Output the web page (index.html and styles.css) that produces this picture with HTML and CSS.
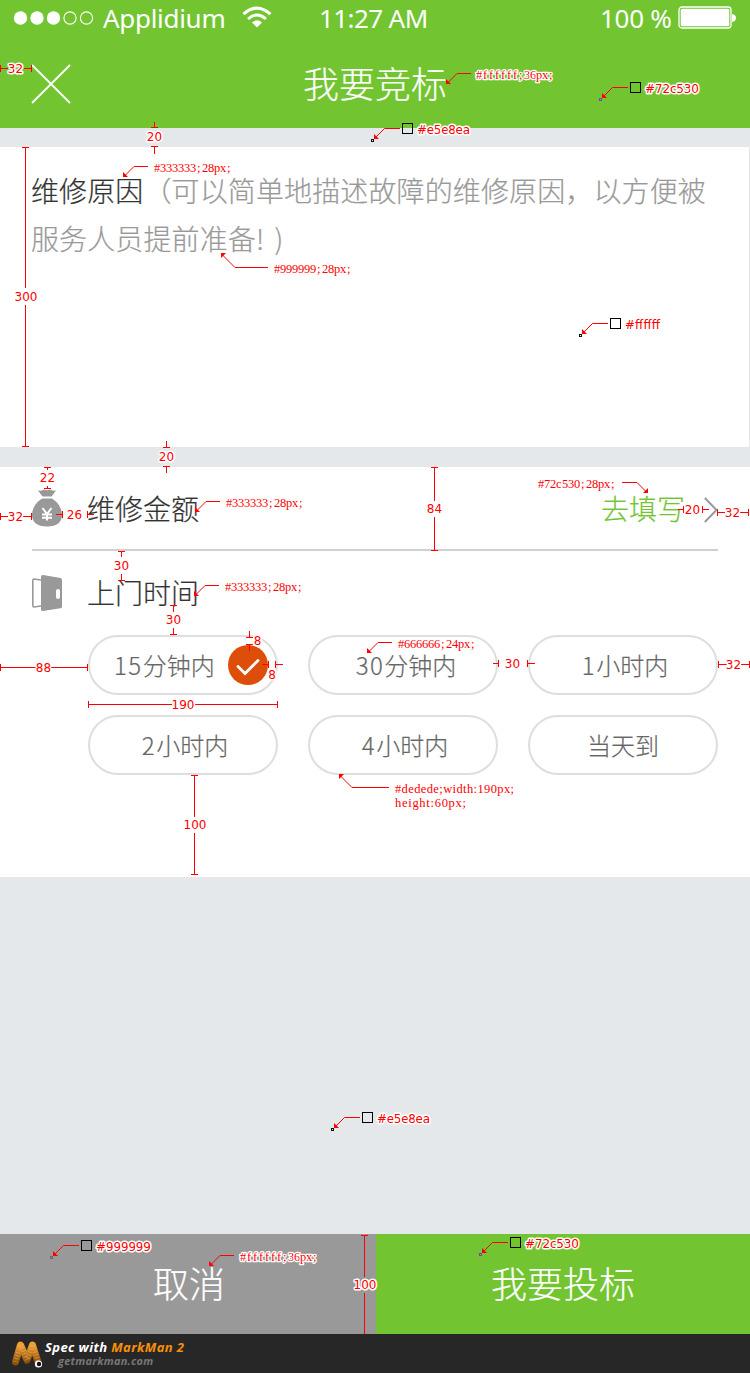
FILE: index.html
```html
<!DOCTYPE html>
<html lang="zh-CN">
<head>
<meta charset="utf-8">
<title>我要竞标</title>
<link rel="stylesheet" href="styles.css">
</head>
<body>
<div class="page">
  <header class="top">
    <div class="status">
      <svg class="signal" width="82" height="16" viewBox="0 0 82 16"><g fill="#fff"><circle cx="7.5" cy="8" r="6.7"/><circle cx="24" cy="8" r="6.7"/><circle cx="40.500" cy="8" r="6.7"/></g><g fill="none" stroke="#fff" stroke-width="1.1"><circle cx="57" cy="8" r="6.1"/><circle cx="73.5" cy="8" r="6.1"/></g></svg>
      <span class="carrier">Applidium</span>
      <svg class="wifi" width="30" height="22" viewBox="0 0 30 22"><g fill="none" stroke="#fff" stroke-width="3"><path d="M1.500 8.200Q15 -4 28.500 8.200"/><path d="M6 13Q15 5 24 13"/></g><path d="M10 16.500Q15 12.200 20 16.500L15 21.500Z" fill="#fff"/></svg>
      <span class="clock">11:27 AM</span>
      <span class="percent">100 %</span>
      <svg class="battery" width="58" height="24" viewBox="0 0 58 24"><rect x="1" y="1" width="52" height="21" rx="3" fill="none" stroke="#fff" stroke-width="1.300"/><rect x="2.700" y="2.700" width="48.600" height="17.600" rx="1.500" fill="#fff"/><path d="M54 8Q58 8.500 58 12Q58 15.500 54 16Z" fill="#fff"/></svg>
    </div>
    <div class="nav">
      <svg class="close" width="40" height="40" viewBox="0 0 40 40"><path d="M1 1L39 39M39 1L1 39" stroke="#fff" stroke-width="1.800"/></svg>
      <h1 class="title">我要竞标</h1>
    </div>
  </header>

  <section class="reason"><b class="reason-label">维修原因</b>（可以简单地描述故障的维修原因，以方便被服务人员提前准备<span class="ending">! )</span></section>

  <section class="details">
    <div class="row amount">
      <svg class="icon" width="30" height="38" viewBox="0 0 30 38"><g fill="#999"><path d="M6 1.500Q11 2 12 .5Q15 2 18 .5Q20 2 24 1.500L19.500 7.500H10.500Z"/><path d="M10.500 9.500H19.500C25 12 30 19 30 26C30 33 25 37.500 15 37.500S0 33 0 26C0 19 5 12 10.500 9.500Z"/></g><path d="M10.500 19L15 25L19.500 19M15 25V31.500M10 25.500H20M10 28.700H20" fill="none" stroke="#fff" stroke-width="2"/></svg>
      <span class="label">维修金额</span>
      <span class="fill-link">去填写</span>
      <svg class="chevron" width="14" height="26" viewBox="0 0 14 26"><path d="M.8 1L12.500 13L.8 25" fill="none" stroke="#999" stroke-width="2"/></svg>
    </div>
    <div class="row time">
      <svg class="icon" width="30" height="38" viewBox="0 0 30 38"><path d="M9 6L2 5Q.8 5 .8 6.500V31.500Q.8 33 2 33L9 32" fill="none" stroke="#999" stroke-width="1.600"/><path d="M9 2.500Q9 .8 11 1L28.500 4Q30 4.300 30 6V32.500Q30 34 28.500 34.300L11 37Q9 37.200 9 35.500Z" fill="#999"/><rect x="24" y="15" width="4" height="10" rx="2" fill="#fff"/></svg>
      <span class="label">上门时间</span>
    </div>
    <div class="options">
      <div class="pill chosen"><span><span class="digits">15</span>分钟内</span><svg class="check" width="40" height="40" viewBox="0 0 40 40"><circle cx="20" cy="20" r="20" fill="#de4e0b"/><path d="M10 21.500L17 28.500L30 15.500" fill="none" stroke="#fff" stroke-width="2.800" stroke-linecap="round"/></svg></div>
      <div class="pill nudge-3"><span><span class="digits">30</span>分钟内</span></div>
      <div class="pill nudge-2"><span><span class="digits">1</span>小时内</span></div>
      <div class="pill nudge-2"><span><span class="digits">2</span>小时内</span></div>
      <div class="pill nudge-2"><span><span class="digits">4</span>小时内</span></div>
      <div class="pill"><span>当天到</span></div>
    </div>
  </section>

  <footer class="actions">
    <div class="btn cancel">取消</div>
    <div class="btn bid">我要投标</div>
  </footer>
  <div class="credit">
    <svg class="logo" width="32" height="30" viewBox="0 0 32 30"><defs><linearGradient id="worm" x1="0" y1="0" x2="0" y2="1"><stop offset="0" stop-color="#f0a034"/><stop offset="1" stop-color="#8d4f0c"/></linearGradient></defs><g fill="none" stroke-linecap="round" stroke-linejoin="round"><path d="M4.500 22L9.500 5L16 20L21.500 5L27 22" stroke="url(#worm)" stroke-width="7"/><path d="M4.500 22L9.500 5L16 20L21.500 5L27 22" stroke="#f2c06d" stroke-width="4.500" stroke-linecap="butt" stroke-dasharray="1 2" opacity=".45"/></g><circle cx="27.500" cy="24" r="3.600" fill="#fff"/><circle cx="28" cy="24" r="2.200" fill="#111"/></svg>
    <div class="credit-text">
      <div class="credit-name">Spec with <span class="brand">MarkMan 2</span></div>
      <div class="credit-site">getmarkman.com</div>
    </div>
  </div>

  <svg class="notes" width="750" height="1373" viewBox="0 0 750 1373">
    <defs>
      <g id="picker">
        <path class="line" d="M-2 5.500H-17.500L-26 14"/><path class="tip" d="M-28 11V16H-23Z"/><rect class="box" x=".5" y=".5" width="10" height="10"/>
      </g>
      <g id="arrow"><path class="line" d="M25 -10.500H11L1 -.5"/><path class="tip" d="M0 -5V0H5Z"/></g>
    </defs>
    <g class="dims">
      <path d="M.5 65V72M0 68.500H8M24 68.500H32M31.500 65V72"/>
      <path d="M151 127.500H158M154.500 122V128M151 146.500H158M154.500 147V154"/>
      <path d="M22 147.500H29M25.500 147V288M25.500 305V447M22 446.500H29"/>
      <path d="M163 447.500H170M166.500 441V447M163 466.500H170M166.500 466V473"/>
      <path d="M44 467.500H51M47.500 467V470M44 488.500H51M47.500 486V489"/>
      <path d="M.5 513V520M0 516.500H8M23 516.500H32M31.500 513V520"/>
      <path d="M56 514.500H63M62.500 511V518M87.500 511V518M87 514.500H94"/>
      <path d="M431 467.500H438M434.500 467V501M434.500 517V551M431 550.500H438"/>
      <path d="M678 509.500H684M683.500 506V513M702.500 506V513M702 509.500H709"/>
      <path d="M717.500 509V516M717 512.500H725M740 512.500H749M748.500 509V516"/>
      <path d="M118 551.500H125M121.500 551V557M121.500 574V580M118 580.500H125"/>
      <path d="M170 605.500H177M173.500 605V612M173.500 628V635M170 634.500H177"/>
      <path d="M246 637.500H253M249.500 631V637M246 644.500H253M249.500 644V651"/>
      <path d="M262 664.500H268M268.500 661V668M275.500 661V668M275 664.500H283"/>
      <path d="M.5 664V671M0 667.500H36M51 667.500H88M87.500 664V671"/>
      <path d="M88.500 701V708M88 704.500H172M195 704.500H278M277.500 701V708"/>
      <path d="M191 775.500H198M194.500 775V817M194.500 833V875M191 874.500H198"/>
      <path d="M493 663.500H499M498.500 660V667M527.500 660V667M527 663.500H535"/>
      <path d="M718.500 661V668M718 664.500H727M741 664.500H750M749.500 661V668"/>
      <path d="M361 1235.500H368M364.500 1235V1277M364.500 1293V1334"/>
    </g>
    <g class="num">
      <text x="15.500" y="73">32</text><text x="154.500" y="141">20</text><text x="26" y="301">300</text><text x="166.500" y="461">20</text><text x="47.500" y="482">22</text><text x="15.500" y="521">32</text><text x="74.500" y="519">26</text><text x="434.500" y="513">84</text><text x="692.500" y="514">20</text><text x="732.500" y="517">32</text><text x="121.500" y="570">30</text><text x="173.500" y="624">30</text><text x="257.500" y="645">8</text><text x="272" y="679">8</text><text x="43.500" y="672">88</text><text x="183" y="709">190</text><text x="195" y="829">100</text><text x="512.500" y="668">30</text><text x="733.500" y="669">32</text><text x="365" y="1289">100</text>
    </g>
    <use href="#picker" x="630" y="82"/><use href="#picker" x="402" y="123"/><use href="#picker" x="610" y="318"/><use href="#picker" x="362" y="1112"/><use href="#picker" x="81" y="1240"/><use href="#picker" x="510" y="1237"/>
    <g class="spot"><rect x="599.500" y="98.500" width="2" height="2" stroke="#8040c0"/><rect x="371.500" y="139.500" width="2" height="2"/><rect x="579.500" y="334.500" width="2" height="2"/><rect x="331.500" y="1128.500" width="2" height="2"/><rect x="50.500" y="1256.500" width="2" height="2" stroke="#666"/><rect x="479.500" y="1253.500" width="2" height="2" stroke="#8040c0"/></g>
    <g class="hex"><text x="645" y="93" textLength="54">#72c530</text><text x="417" y="134" textLength="53">#e5e8ea</text><text x="625" y="329" textLength="35">#ffffff</text><text x="377" y="1123" textLength="53">#e5e8ea</text><text x="96" y="1251" textLength="55">#999999</text><text x="525" y="1248" textLength="54">#72c530</text></g>
    <use href="#arrow" x="446" y="84"/><use href="#arrow" x="123" y="177"/><use href="#arrow" x="195" y="512"/><use href="#arrow" x="194" y="596"/><use href="#arrow" x="367" y="653"/><use href="#arrow" x="209" y="1266"/>
    <path class="line" d="M268 267.500H235L222 254.500M389 787.500H352L340 775.500M622 482.500H637L647 492.500"/>
    <path class="tip" d="M221 258V253H226ZM339 779V774H344ZM643 493H648V488Z"/>
    <g class="spec">
      <text class="halo" transform="translate(476 79)" x="0 7 13 19 25 31 37 43 48 54 60 66 73">#ffffff;36px;</text>
      <text transform="translate(154 172)" x="0 6 12 18 24 30 36 43 48 54 60 66 73">#333333;28px;</text>
      <text transform="translate(274 273)" x="0 6 12 18 24 30 36 43 48 54 60 66 73">#999999;28px;</text>
      <text transform="translate(226 507)" x="0 6 12 18 24 30 36 43 48 54 60 66 73">#333333;28px;</text>
      <text transform="translate(538 488)" x="0 6 12 18 24 30 36 43 48 54 60 66 73">#72c530;28px;</text>
      <text transform="translate(225 591)" x="0 6 12 18 24 30 36 43 48 54 60 66 73">#333333;28px;</text>
      <text transform="translate(398 648)" x="0 6 12 18 24 30 36 43 48 54 60 66 73">#666666;24px;</text>
      <text transform="translate(395 793)" textLength="119">#dedede;width:190px;</text>
      <text transform="translate(395 807)" textLength="71">height:60px;</text>
      <text class="halo" transform="translate(240 1261)" x="0 7 13 19 25 31 37 43 48 54 60 66 73">#ffffff;36px;</text>
    </g>
  </svg>
</div>
</body>
</html>
```
FILE: styles.css
```css
* { box-sizing: border-box; }
body { margin: 0; }
svg { display: block; flex: none; }
.page {
  position: relative;
  width: 750px;
  height: 1373px;
  display: flex;
  flex-direction: column;
  overflow: hidden;
  background: #e5e8ea;
  font-family: "Noto Sans CJK SC", sans-serif;
  font-weight: 300;
}
.top { height: 128px; background: #72c530; color: #fff; }
.status {
  display: flex;
  align-items: center;
  height: 36px;
  padding-left: 13px;
  font: 400 26px/36px "Noto Sans", sans-serif;
  white-space: nowrap;
}
.carrier { width: 123px; margin-left: 8px; letter-spacing: -.3px; }
.wifi { margin: 0 0 2px 16px; }
.clock { width: 110px; margin-left: 47px; letter-spacing: -.6px; }
.percent { width: 72px; margin-left: 171px; letter-spacing: -.3px; }
.battery { margin-left: 6px; }
.nav { position: relative; display: flex; align-items: center; justify-content: center; height: 92px; }
.close { position: absolute; left: 31px; top: 28px; }
.title { margin: 0; font-size: 36px; font-weight: 300; line-height: 92px; }
.title, .label, .fill-link, .reason, .pill, .btn { -webkit-text-stroke: .2px currentColor; }
.reason {
  width: 749px;
  height: 300px;
  margin-top: 19px;
  padding: 19px 40px 0 31px;
  background: #fff;
  color: #999;
  font-size: 28px;
  line-height: 48px;
  letter-spacing: .12px;
}
.reason-label { color: #333; font-weight: 300; }
.ending { letter-spacing: 2px; }
.details { height: 410px; margin-top: 20px; padding: 0 32px; background: #fff; }
.row { display: flex; align-items: center; height: 84px; color: #333; font-size: 28px; line-height: 82px; }
.amount { border-bottom: 2px solid #d0d0d0; }
.label { margin-left: 25px; }
.time .label { padding-bottom: 2px; }
.fill-link { margin-left: auto; color: #72c530; }
.chevron { margin: 4px 0 0 19px; }
.options { display: grid; grid-template-columns: repeat(3, 190px); gap: 20px 30px; padding-left: 56px; }
.pill {
  display: flex;
  align-items: center;
  justify-content: center;
  height: 60px;
  border: 2px solid #dedede;
  border-radius: 30px;
  color: #666;
  font-size: 24px;
}
.pill span { padding-bottom: 2px; }
.digits { letter-spacing: 1.5px; }
.chosen { justify-content: flex-start; padding-left: 24px; }
.check { margin-left: 13px; }
.nudge-3 { padding-left: 6px; }
.nudge-2 { padding-left: 4px; }
.actions { display: flex; height: 100px; margin-top: auto; color: #fff; font-size: 36px; line-height: 97px; text-align: center; }
.cancel { width: 376px; padding-left: 2px; background: #999; }
.bid { width: 374px; background: #72c530; }
.credit { display: flex; height: 39px; padding: 6px 0 0 11px; background: #272727; }
.credit-text { margin-left: 2px; font: italic 700 13px/15px "Open Sans", sans-serif; color: #fff; }
.credit-name { white-space: nowrap; letter-spacing: .4px; }
.brand { color: #f8900a; }
.credit-site { margin-left: 13px; color: #777; font-size: 11px; line-height: 11px; letter-spacing: .25px; }
.notes { position: absolute; left: 0; top: 0; }
.dims path, .line { fill: none; stroke: #f00; stroke-width: 1; }
.dims path { shape-rendering: crispEdges; }
.tip { fill: #f00; }
.box { fill: none; stroke: #000; }
.spot { fill: none; stroke: #111; }
.num, .hex { font: 400 12px "DejaVu Sans", sans-serif; }
.num { text-anchor: middle; }
.spec { font: 400 12.500px "Liberation Serif", serif; fill: #f00; }
.num, .hex, .halo { fill: #f00; stroke: #fff; stroke-width: 3px; stroke-linejoin: round; paint-order: stroke; }
.halo { stroke-width: 2.500px; }
```
